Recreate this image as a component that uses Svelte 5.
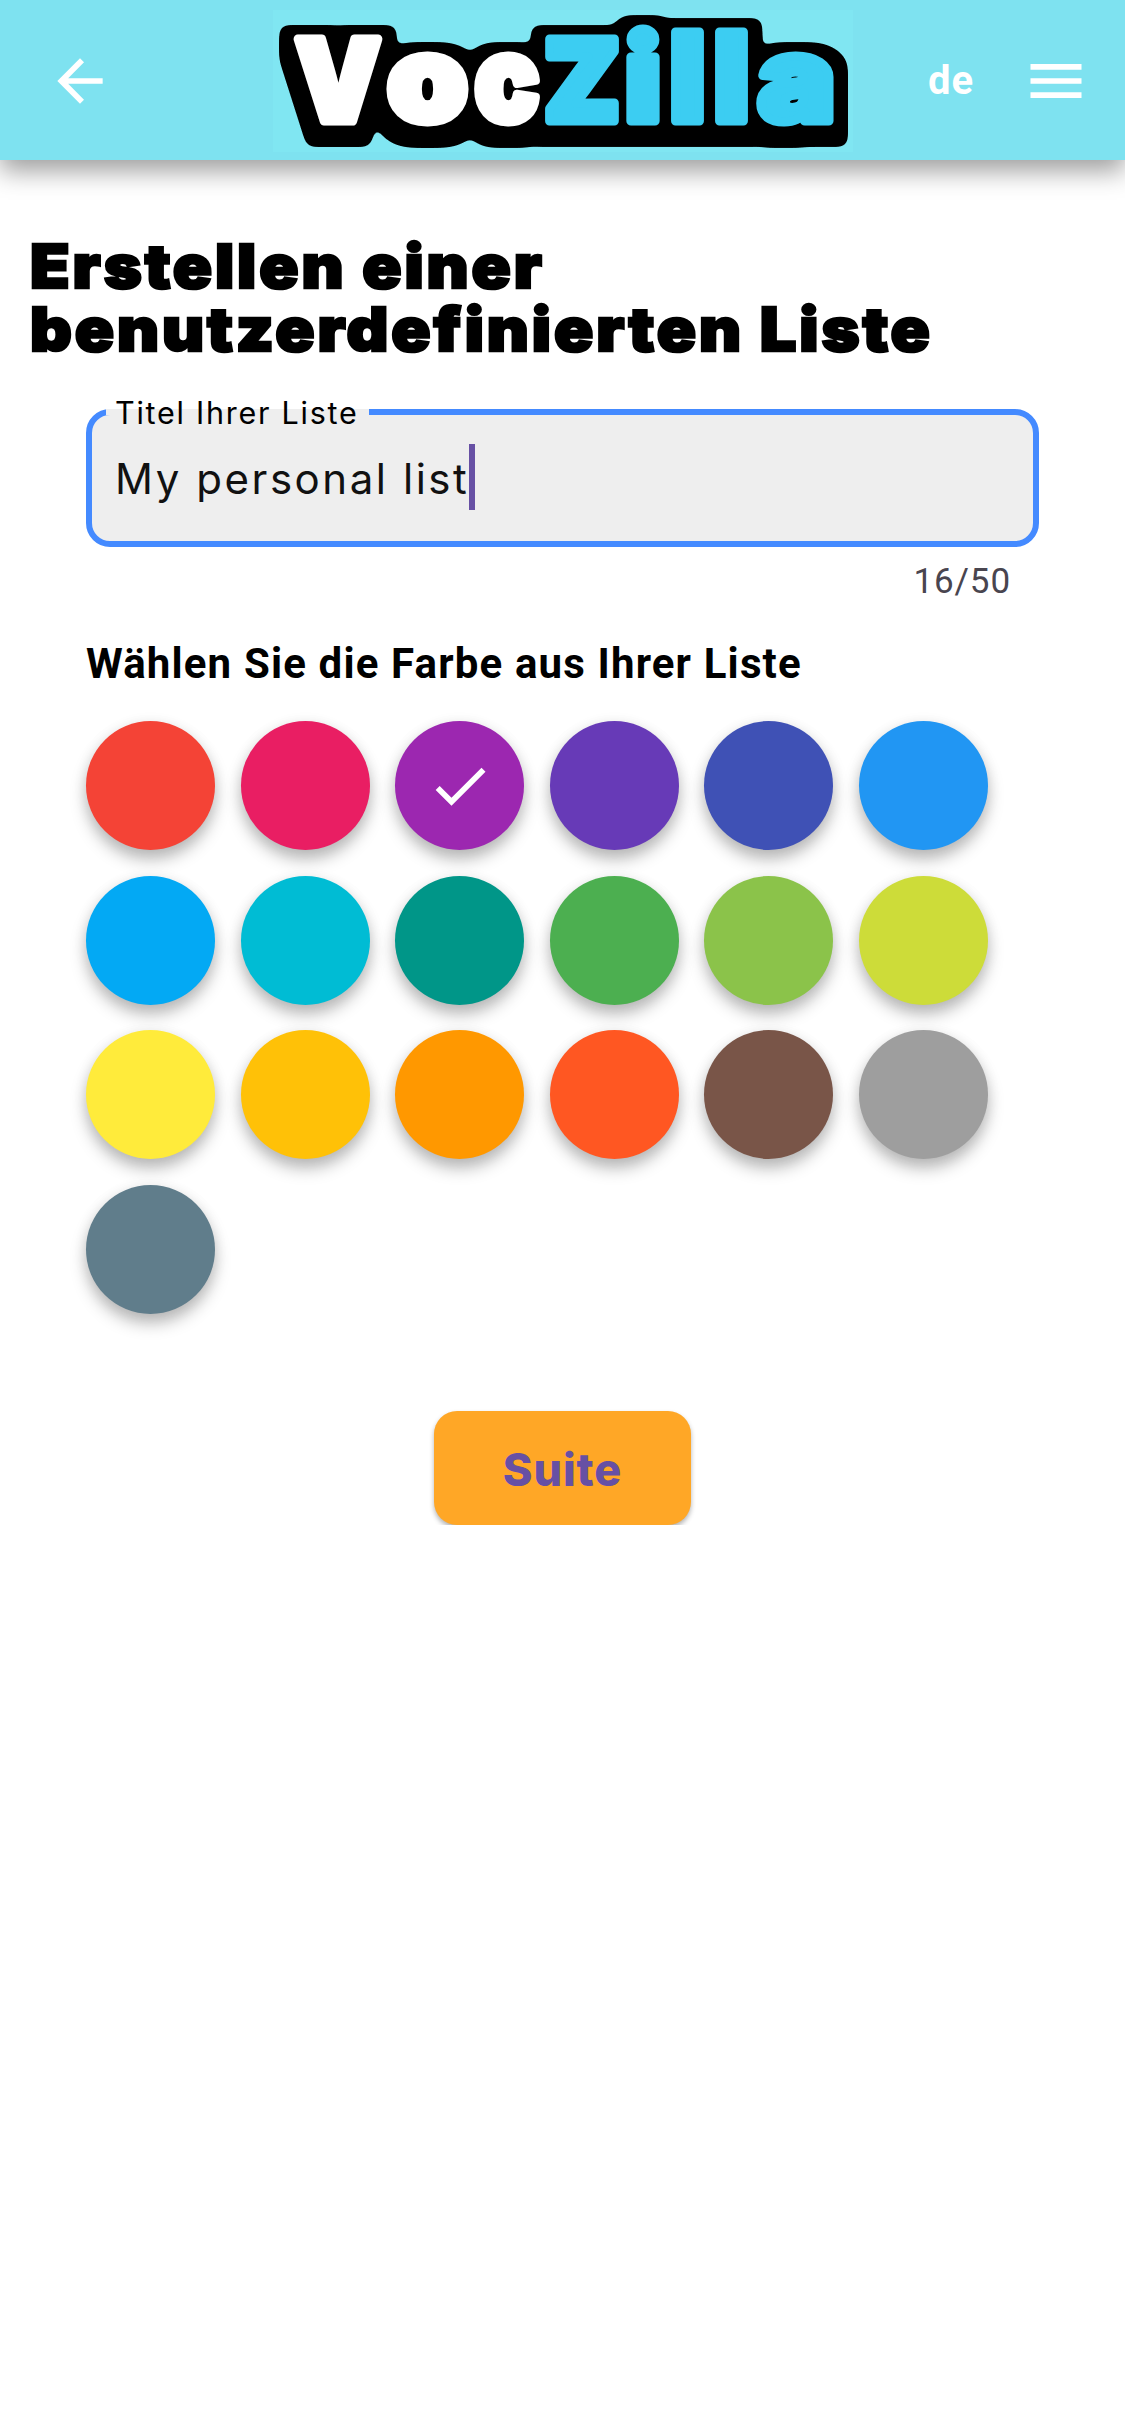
<script>
  const maxLength = 50;
  const title = 'My personal list';
  const selected = 2;
  const colors = [
    '#f44336', '#e91e63', '#9c27b0', '#673ab7', '#3f51b5', '#2196f3',
    '#03a9f4', '#00bcd4', '#009688', '#4caf50', '#8bc34a', '#cddc39',
    '#ffeb3b', '#ffc107', '#ff9800', '#ff5722', '#795548', '#9e9e9e',
    '#607d8b'
  ];
  // Wordmark letters: left edge, font size and drawn width
  const letters = [
    { ch: 'V', x: 22.5, size: 113, w: 85, tone: 'light' },
    { ch: 'o', x: 114.5, size: 118, w: 80, tone: 'light' },
    { ch: 'c', x: 202, size: 118, w: 64, tone: 'light' },
    { ch: 'Z', x: 271, size: 113, w: 76, tone: 'blue' },
    { ch: 'i', x: 352, size: 117, w: 36, tone: 'blue' },
    { ch: 'l', x: 396.5, size: 122, w: 36, tone: 'blue' },
    { ch: 'l', x: 440.5, size: 122, w: 36, tone: 'blue' },
    { ch: 'a', x: 485, size: 118, w: 77, tone: 'blue' }
  ];
</script>

<header>
  <button class="icon" aria-label="Zurück">
    <svg viewBox="0 0 24 24"><path d="M20 11H7.83l5.59-5.59L12 4l-8 8 8 8 1.41-1.41L7.83 13H20v-2z" /></svg>
  </button>
  <svg class="logo" viewBox="0 0 580 142" role="img" aria-label="VocZilla">
    <!-- Rounded black outline, extruded downwards -->
    <filter id="outline" filterUnits="userSpaceOnUse" x="-10" y="-9" width="600" height="160" color-interpolation-filters="sRGB">
      <feMorphology in="SourceAlpha" operator="dilate" radius="13 8" />
      <feGaussianBlur stdDeviation="4.5" />
      <feComponentTransfer result="edge">
        <feFuncR type="discrete" tableValues="0" />
        <feFuncG type="discrete" tableValues="0" />
        <feFuncB type="discrete" tableValues="0" />
        <feFuncA type="linear" slope="12" intercept="-4" />
      </feComponentTransfer>
      <feOffset in="edge" dy="4" result="e1" />
      <feOffset in="edge" dy="8" result="e2" />
      <feOffset in="edge" dy="12" result="e3" />
      <feMerge>
        <feMergeNode in="e3" />
        <feMergeNode in="e2" />
        <feMergeNode in="e1" />
        <feMergeNode in="edge" />
        <feMergeNode in="SourceGraphic" />
      </feMerge>
    </filter>
    <g filter="url(#outline)">
      {#each letters as l}
        <text class={l.tone} x={l.x} y="110.5" font-size={l.size} textLength={l.w} lengthAdjust="spacingAndGlyphs">{l.ch}</text>
      {/each}
    </g>
  </svg>
  <span class="lang">de</span>
  <button class="icon" aria-label="Menü">
    <svg viewBox="0 0 24 24"><path d="M3 18h18v-2H3v2zm0-5h18v-2H3v2zm0-7v2h18V6H3z" /></svg>
  </button>
</header>

<main>
  <h1>Erstellen einer<br />benutzerdefinierten Liste</h1>
  <section>
    <div class="field">
      <span class="label">Titel Ihrer Liste</span>
      <span class="value">{title}</span><span class="caret"></span>
    </div>
    <div class="counter">{title.length}/{maxLength}</div>
    <h2>Wählen Sie die Farbe aus Ihrer Liste</h2>
    <div class="swatches">
      {#each colors as color, i}
        <button class="swatch" style:background={color} aria-label={color}>
          {#if i === selected}
            <svg viewBox="0 0 24 24"><path d="M9 16.17L4.83 12l-1.42 1.41L9 19 21 7l-1.41-1.41z" /></svg>
          {/if}
        </button>
      {/each}
    </div>
    <button class="next">Suite</button>
  </section>
</main>

<style>
  :global(body) {
    background: #fff;
    font-family: Roboto, sans-serif;
  }
  button {
    border: 0;
    padding: 0;
    background: none;
  }
  header {
    height: 160px;
    box-sizing: border-box;
    padding: 1px 35px 0 46px;
    display: flex;
    align-items: center;
    background: #7ee2f0;
    box-shadow: 0 11px 24px rgba(0, 0, 0, 0.38);
  }
  .icon,
  .icon svg {
    display: block;
    width: 68px;
    height: 68px;
  }
  .icon svg,
  .swatch svg {
    fill: #fff;
  }
  .logo {
    width: 580px;
    height: 142px;
    margin-left: 159px;
    overflow: visible;
    background: #80e6f2;
    font-family: Inter, sans-serif;
    font-weight: 900;
    stroke-width: 9px;
    stroke-linejoin: round;
  }
  .light {
    fill: #fff;
    stroke: #fff;
  }
  .blue {
    fill: #3ccdf2;
    stroke: #3ccdf2;
  }
  .lang {
    flex: 1;
    margin-left: 75px;
    font-size: 40px;
    line-height: 48px;
    font-weight: 700;
    letter-spacing: 1.1px;
    color: #fff;
  }
  main {
    padding: 74.5px 30px 0;
  }
  h1 {
    margin: 0;
    font-family: Inter, sans-serif;
    font-size: 60px;
    line-height: 63px;
    font-weight: 900;
    letter-spacing: 2.7px;
    color: #000;
    white-space: nowrap;
    transform: scaleX(1.08);
    transform-origin: left;
    -webkit-text-stroke: 2.5px #000;
    stroke-linejoin: round;
  }
  section {
    display: flex;
    flex-direction: column;
    padding: 0 56px;
    margin-top: 48.5px;
  }
  .field {
    position: relative;
    box-sizing: border-box;
    height: 138px;
    padding: 29px 0 0 23px;
    display: flex;
    border: 6px solid #448aff;
    border-radius: 24px;
    background: #eee;
    font-family: Inter, sans-serif;
  }
  .label {
    position: absolute;
    left: 14px;
    top: -6px;
    height: 6px;
    width: 254px;
    padding-left: 9px;
    background: #eee;
    font-size: 30.5px;
    line-height: 8px;
    letter-spacing: 1.75px;
    color: #000;
    white-space: nowrap;
  }
  .value {
    font-size: 42px;
    line-height: 70px;
    letter-spacing: 2.55px;
    color: #111;
    white-space: nowrap;
  }
  .caret {
    width: 6px;
    height: 66px;
    background: #6750a4;
  }
  .counter {
    margin: 14px 28px 0 0;
    text-align: right;
    font-size: 35px;
    line-height: 42px;
    letter-spacing: 0.9px;
    color: #49454f;
  }
  h2 {
    margin: 36px 0 32px;
    font-size: 42px;
    line-height: 50px;
    font-weight: 700;
    letter-spacing: 1.15px;
    color: #000;
    white-space: nowrap;
  }
  .swatches {
    display: grid;
    grid-template-columns: repeat(6, 129px);
    grid-auto-rows: 129px;
    gap: 25.6px 25.5px;
  }
  .swatch {
    display: grid;
    place-items: center;
    border-radius: 50%;
    box-shadow: 0 10px 16px rgba(0, 0, 0, 0.25), 0 2px 14px rgba(0, 0, 0, 0.08);
  }
  .swatch svg {
    width: 68px;
    height: 68px;
  }
  .next {
    align-self: center;
    width: 257px;
    height: 114px;
    margin-top: 97px;
    padding-top: 3px;
    border-radius: 23px;
    background: #ffa726;
    box-shadow: 0 3px 5px rgba(0, 0, 0, 0.3);
    font-family: Inter, sans-serif;
    font-size: 45px;
    font-weight: 800;
    letter-spacing: 0.9px;
    color: #6750a4;
  }
</style>
